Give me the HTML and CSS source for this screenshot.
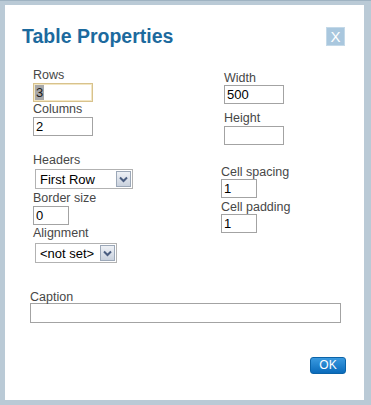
FILE: index.html
```html
<!DOCTYPE html>
<html lang="en">
<head>
    <meta charset="UTF-8">
    <title>Table Properties</title>
    <link rel="stylesheet" href="styles.css">
</head>
<body>
    <div class="dialog">
        <div class="head">
            <h1>Table Properties</h1>
            <span class="close">X</span>
        </div>
        <div class="cols">
            <div class="col left">
                <label class="lbl">Rows</label>
                <div class="txt wide focus"><span class="sel">3</span></div>
                <label class="lbl">Columns</label>
                <input class="txt wide" type="text" value="2">
                <label class="lbl mt17">Headers</label>
                <div class="select sel-headers">
                    <span class="val">First Row</span>
                    <span class="arrow"><svg width="9" height="7" viewBox="0 0 9 7"><path d="M1 1.5 L4.5 5 L8 1.5" fill="none" stroke="#4a5d80" stroke-width="2"/></svg></span>
                </div>
                <label class="lbl mt2">Border size</label>
                <input class="txt small" type="text" value="0">
                <label class="lbl mt1">Alignment</label>
                <div class="select sel-align">
                    <span class="val">&lt;not set&gt;</span>
                    <span class="arrow"><svg width="9" height="7" viewBox="0 0 9 7"><path d="M1 1.5 L4.5 5 L8 1.5" fill="none" stroke="#4a5d80" stroke-width="2"/></svg></span>
                </div>
            </div>
            <div class="col right">
                <div class="shift">
                    <label class="lbl">Width</label>
                    <input class="txt wide flush" type="text" value="500">
                    <label class="lbl mt7">Height</label>
                    <input class="txt wide" type="text" value="">
                </div>
                <label class="lbl mt20">Cell spacing</label>
                <input class="txt small flush" type="text" value="1">
                <label class="lbl mt2">Cell padding</label>
                <input class="txt small flush" type="text" value="1">
            </div>
        </div>
        <div class="caption">
            <label class="lbl">Caption</label>
            <input class="txt full" type="text" value="">
        </div>
        <div class="actions">
            <button class="ok">OK</button>
        </div>
    </div>
</body>
</html>
```

FILE: styles.css
```css
html,body{
    margin:0;
    padding:0;
}
body{
    background:#bacad6;
    width:371px;
    height:405px;
    overflow:hidden;
    font-family:"Liberation Sans",Arial,sans-serif;
    box-sizing:border-box;
    border-top:1px solid #9fb3c2;
}
.dialog{
    margin:4px 7px 0 5px;
    height:395px;
    box-sizing:border-box;
    background:#fff;
    padding:21px 18px 0 17px;
}
.head{
    display:flex;
    justify-content:space-between;
    align-items:center;
    height:20px;
}
.head h1{
    margin:0;
    font-size:19.5px;
    line-height:20px;
    font-weight:bold;
    color:#1c6a9e;
}
.close{
    width:19px;height:19px;
    margin-right:1px;
    background:#a9c7de;
    border:1px solid #c4d9e8;
    box-sizing:border-box;
    color:#fff;
    font-size:15px;
    line-height:17px;
    text-align:center;
}
.cols{
    display:flex;
    margin-top:22px;
    padding-left:11px;
}
.col{
    display:flex;
    flex-direction:column;
    align-items:flex-start;
}
.left{
    width:188px;
}
.shift{
    display:flex;
    flex-direction:column;
    align-items:flex-start;
    padding:3px 0 0 3px;
}
.lbl{
    display:block;
    font-size:12.5px;
    line-height:14px;
    height:14px;
    color:#474747;
}
.mt1{margin-top:1px;}
.mt2{margin-top:2px;}
.mt7{margin-top:7px;}
.mt17{margin-top:17px;}
.mt20{margin-top:20px;}
.txt{
    display:block;
    margin:1px 0 0 0;
    height:19px;
    box-sizing:border-box;
    border:1px solid #a3a3a3;
    padding:0 2px;
    font-family:"Liberation Sans",Arial,sans-serif;
    font-size:13px;
    line-height:17px;
    color:#000;
    background:#fff;
    outline:none;
}
.txt.flush{
    margin-top:0;
}
.wide{width:60px;}
.small{width:36px;}
.full{width:311px;margin-top:-1px;height:20px;}
.focus{
    border-color:#d8c28c;
    box-shadow:inset 0 0 0 1px #f2e6c4;
    padding-left:1px;
}
.sel{
    background:#a8a8a8;
    color:#1a1a1a;
    padding:0 1px;
}
.select{
    display:flex;
    align-items:center;
    justify-content:space-between;
    margin:2px 0 0 2px;
    height:20px;
    box-sizing:border-box;
    border:1px solid #b2b2b2;
    background:#fff;
    font-size:13px;
    color:#000;
    padding:0 0 0 4px;
}
.sel-headers{width:98px;}
.sel-align{width:82px;margin-top:3px;}
.arrow{
    width:15px;height:16px;
    margin-right:1px;
    box-sizing:border-box;
    border:1px solid #9ca8b8;
    background:linear-gradient(#eef1f6,#c9d1dd);
    display:flex;
    align-items:center;
    justify-content:center;
}
.caption{
    margin:27px 0 0 8px;
}
.actions{
    display:flex;
    justify-content:flex-end;
    margin-top:34px;
}
.ok{
    width:36px;height:17px;
    padding:0;
    border:1px solid #0b63a8;
    border-radius:3px;
    background:linear-gradient(#3a9ae0,#0a6bbb);
    color:#fff;
    font-family:"Liberation Sans",Arial,sans-serif;
    font-size:12px;
    line-height:15px;
    cursor:pointer;
}
```
